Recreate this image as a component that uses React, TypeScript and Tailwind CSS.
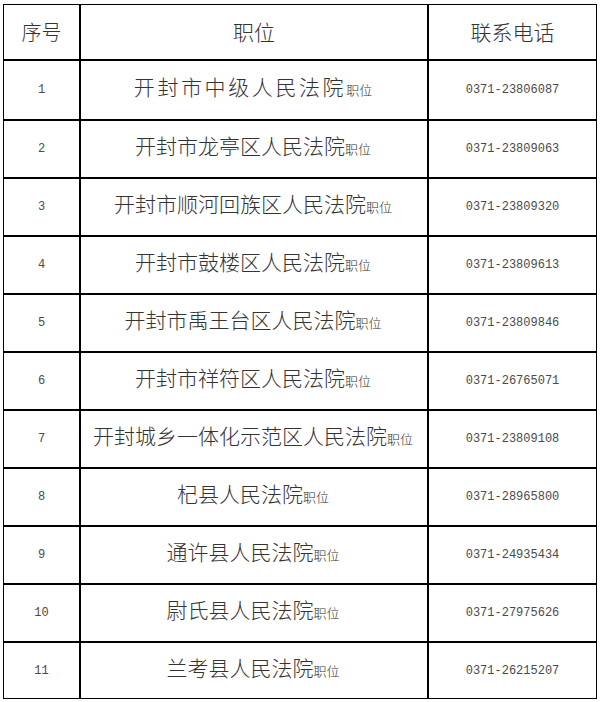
import React from 'react';

interface Court {
  no: number;
  name: string;
  phone: string;
  wide?: boolean;
}

const courts: Court[] = [
  { no: 1, name: '开封市中级人民法院', phone: '0371-23806087', wide: true },
  { no: 2, name: '开封市龙亭区人民法院', phone: '0371-23809063' },
  { no: 3, name: '开封市顺河回族区人民法院', phone: '0371-23809320' },
  { no: 4, name: '开封市鼓楼区人民法院', phone: '0371-23809613' },
  { no: 5, name: '开封市禹王台区人民法院', phone: '0371-23809846' },
  { no: 6, name: '开封市祥符区人民法院', phone: '0371-26765071' },
  { no: 7, name: '开封城乡一体化示范区人民法院', phone: '0371-23809108' },
  { no: 8, name: '杞县人民法院', phone: '0371-28965800' },
  { no: 9, name: '通许县人民法院', phone: '0371-24935434' },
  { no: 10, name: '尉氏县人民法院', phone: '0371-27975626' },
  { no: 11, name: '兰考县人民法院', phone: '0371-26215207' },
];

const cjk = "font-['Noto_Sans_CJK_SC',sans-serif] font-light";
const mono = "font-['Liberation_Mono','DejaVu_Sans_Mono',monospace] text-[#4a4a4a]";

export default function App() {
  return (
    <div className="bg-white w-[602px] h-[702px] pl-[3px] pt-[4px]">
      <div className="w-[594px] border border-black text-[#333333]">
        {/* Header */}
        <div className="grid grid-cols-[77px_348px_167px] h-[56px] border-b-2 border-black">
          <div className={`flex items-center justify-center border-r-2 border-black text-[20px] ${cjk}`}>
            序号
          </div>
          <div className={`flex items-center justify-center border-r-2 border-black text-[21px] ${cjk}`}>
            职位
          </div>
          <div className={`flex items-center justify-center text-[21px] ${cjk}`}>联系电话</div>
        </div>

        {/* Rows */}
        {courts.map((c, i) => {
          const last = i === courts.length - 1;
          const height = i === 0 ? 'h-[60px]' : last ? 'h-[55px]' : 'h-[58px]';
          return (
            <div
              key={c.no}
              className={`grid grid-cols-[77px_348px_167px] ${height} ${last ? '' : 'border-b-2 border-black'}`}
            >
              <div className={`flex items-center justify-center border-r-2 border-black text-[12px] ${mono}`}>
                {c.no}
              </div>
              <div className={`flex items-center justify-center border-r-2 border-black pb-[7px] pr-[2px] ${cjk}`}>
                <span className="leading-none">
                  <span className={`text-[21px] ${c.wide ? 'tracking-[2.6px]' : ''}`}>{c.name}</span>
                  <span className="text-[13px]">职位</span>
                </span>
              </div>
              <div className={`flex items-center justify-center text-[12px] ${mono}`}>{c.phone}</div>
            </div>
          );
        })}
      </div>
    </div>
  );
}
